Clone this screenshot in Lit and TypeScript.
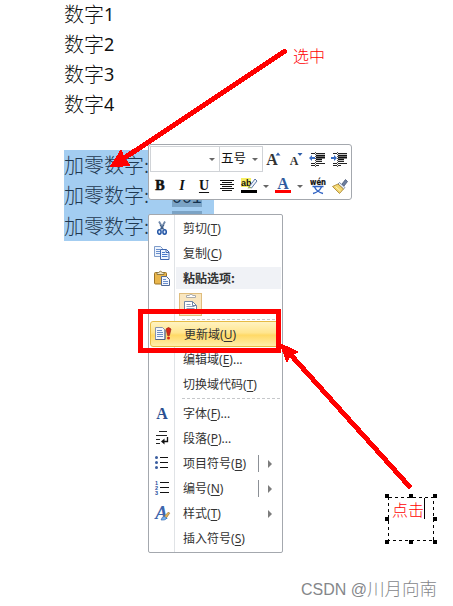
import { LitElement, html, svg, css, nothing, TemplateResult } from "lit";
import { customElement, property } from "lit/decorators.js";

const icons: Record<string, TemplateResult> = {
  cut: svg`<path d="M5 1.5 9.6 9.5M11 1.5 6.6 9.5" stroke="#6f87a8" stroke-width="1.8"/><path d="M6 5 9 9M10 5 7 9" stroke="#35557f"/><ellipse cx="5.4" cy="12" rx="1.7" ry="2.2" fill="#dce8fa" stroke="#2456a5" stroke-width="1.5"/><ellipse cx="10.6" cy="12" rx="1.7" ry="2.2" fill="#dce8fa" stroke="#2456a5" stroke-width="1.5"/>`,
  copy: svg`<path d="M0.500 1.500h6l2 2v8h-8z" fill="#eef4fd" stroke="#7f9cc9"/><path d="M2 4.500h4M2 6.500h4M2 8.500h4" stroke="#6b90cc"/><path d="M6.500 4.500h6l2.500 2.500v7.500h-8.500z" fill="#f2f7ff" stroke="#3f66ae"/><path d="M12 4.500v3h3" fill="none" stroke="#3f66ae"/><path d="M8 7.500h3M8 9.500h5.500M8 11.500h5.500" stroke="#4b7bcc"/>`,
  paste: svg`<rect x="0.500" y="2.500" width="12" height="11.500" rx="1" fill="#e9b64c" stroke="#9c7426"/><path d="M3 4.500V2.500h1.500q2-2.500 4 0H10v2z" fill="#f0e6c8" stroke="#8f7a45"/><path d="M7.500 6.500h5l3 3v6h-8z" fill="#f3f7ff" stroke="#536a94"/><path d="M9 9.500h3M9 11.500h5M9 13.500h5" stroke="#6b8fcc"/>`,
  update: svg`<path d="M0.500 1.500h7l2.500 2.500v9.500h-9.500z" fill="#f4f7fd" stroke="#8493b0"/><path d="M0.500 13.500h9.500V4" fill="none" stroke="#52627f"/><path d="M2 4.500h5M2 6.500h6M2 8.500h6M2 10.500h6" stroke="#6c8ec4"/><path d="M11 3q2.500-3 5 0L14.400 9.500h-1.800z" fill="#d92718" stroke="#9c2419" stroke-width=".7"/><circle cx="13.500" cy="12" r="1.500" fill="#d92718"/>`,
  font: svg`<text x="8" y="13.500" text-anchor="middle" font-family="Liberation Serif, serif" font-weight="700" font-size="16" fill="#2b4f91">A</text>`,
  para: svg`<path d="M5 1.500h8M2 5.500h11M2 9.500h4M2 13.500h4" stroke="#222" stroke-width="1.200"/><path d="M13.500 7v4.500H9" fill="none" stroke="#111" stroke-width="1.300"/><path d="M10.500 8.500v6L7 11.500z" fill="#111"/>`,
  bullets: svg`<path d="M6 2.500h8M6 7.500h8M6 12.500h8" stroke="#111"/><g fill="#3a5d9f"><circle cx="2.500" cy="2.500" r="1.500"/><circle cx="2.500" cy="7.500" r="1.500"/><circle cx="2.500" cy="12.500" r="1.500"/></g>`,
  numbers: svg`<path d="M6 2.500h9M6 7.500h9M6 12.500h9" stroke="#111"/><g fill="#274f9c" font-family="Liberation Sans, sans-serif" font-weight="700" font-size="5.500"><text x="1" y="4.500">1</text><text x="1" y="9.500">2</text><text x="1" y="14.500">3</text></g>`,
  style: svg`<text x="7.500" y="14" text-anchor="middle" font-family="Liberation Serif, serif" font-style="italic" font-weight="700" font-size="19" fill="#3d66ad">A</text><path d="M10 11.500 14.500 7l1.200 1.200-3.500 5z" fill="#e5b557" stroke="#8a6a33" stroke-width=".6"/><path d="M7 15q1-4 4-3.500l1.500 1.500Q12 15.500 7 15z" fill="#79b3ee" stroke="#3168ad" stroke-width=".6"/>`,
  center: svg`<path d="M1 2.500h14M3 4.500h10M1 6.500h14M3 8.500h10M1 10.500h14M3 12.500h10" stroke="#111"/>`,
  highlight: svg`<rect x="0" y="0" width="10" height="9" fill="#f6ee62"/><text x="0" y="8" font-family="Liberation Sans, sans-serif" font-size="9" fill="#111">ab</text><path d="M8 9 14 1l2 2L10.500 10z" fill="#edf2fa" stroke="#5b77a5"/><path d="M6.500 10.500 8 8l2.500 2z" fill="#a1b64c"/><path d="M0 12h16v3H0z" fill="#000"/>`,
  color: svg`<text x="8" y="11" text-anchor="middle" font-family="Liberation Serif, serif" font-weight="700" font-size="16" fill="#315b9e">A</text><path d="M0 12h16v3H0z" fill="#f00"/>`,
  grow: svg`<text x="6" y="14" text-anchor="middle" font-family="Liberation Serif, serif" font-weight="700" font-size="16" fill="#333">A</text><path d="M9.500 4.500h5L12 1.500z" fill="#2c5daa"/>`,
  shrink: svg`<text x="6" y="14" text-anchor="middle" font-family="Liberation Serif, serif" font-weight="700" font-size="12" fill="#333">A</text><path d="M9.500 2h5L12 5z" fill="#2c5daa"/>`,
  outdent: svg`<path d="M2 2.500h4M7 2.500h9M7 10.500h6M2 12.500h4M7 12.500h9M2 14.500h4M7 14.500h3" stroke="#222"/><path d="M6.500 1v15" stroke="#555" stroke-dasharray="1 1"/><path d="M7 4.500h9M7 8.500h6" stroke="#111" stroke-width="1.300"/><path d="M7 6.500h9" stroke="#111" stroke-width="2"/><path d="M0 7 3 4v2h3v2H3v2z" fill="#376cc3"/>`,
  indent: svg`<path d="M2 2.500h4M7 2.500h9M7 10.500h6M2 12.500h4M7 12.500h9M2 14.500h4M7 14.500h3" stroke="#222"/><path d="M6.500 1v15" stroke="#555" stroke-dasharray="1 1"/><path d="M7 4.500h9M7 8.500h6" stroke="#111" stroke-width="1.300"/><path d="M7 6.500h9" stroke="#111" stroke-width="2"/><path d="M6 7 3 4v2H0v2h3v2z" fill="#376cc3"/>`,
  phonetic: svg`<text x="0" y="6.500" textLength="16" lengthAdjust="spacingAndGlyphs" font-family="DejaVu Sans, sans-serif" font-size="8" fill="#111" stroke="#111" stroke-width=".2">wén</text><path d="M2.500 8.500h11M4.500 9Q7 14 13 15.500M11.500 9Q9 14 3 15.500" fill="none" stroke="#2f62c3" stroke-width="1.400"/>`,
  brush: svg`<path d="M10 6 13.500 1.500 15.500 3.500 12 8z" fill="#6d7f9f" stroke="#465675" stroke-width=".8"/><path d="M7.500 4.500 13 9.500 11.500 11 6 6z" fill="#eff3fa" stroke="#64779b" stroke-width=".8"/><path d="M6 6 11.500 11 7.500 15.500 0.500 8.500z" fill="#f2d56e" stroke="#a57f29" stroke-width=".8"/><path d="M3.500 8.500 8.500 13" stroke="#fff4bd"/>`,
  pasteBig: svg`<path d="M6.500 3.500v-2H9q2-3 4 0h2.500v2z" fill="#fff" stroke="#aaa"/><path d="M4.500 7.500h8l4 4v8h-12z" fill="#fff" stroke="#6f86a6"/><path d="M12.500 7.500v4h4" fill="none" stroke="#6f86a6"/><path d="M6.500 10.500h4M6.500 12.500h8M6.500 14.500h8M6.500 16.500h8" stroke="#8ea0b9"/>`,
};

const icon = (name: string, w = 17, h = 17) =>
  html`<svg width=${w} height=${h} viewBox="0 0 ${w} ${h}" fill="none">${icons[name]}</svg>`;

@customElement("menu-row")
class MenuRow extends LitElement {
  @property() icon = "";
  @property() label = "";
  @property() key = "";
  @property() tail = "";
  @property({ type: Boolean }) split = false;
  @property({ type: Boolean }) arrow = false;

  static styles = css`
    :host { display: flex; align-items: center; height: 25px; box-sizing: border-box; }
    .icon { width: 25px; display: flex; justify-content: center; flex: none; }
    svg { display: block; overflow: visible; }
    .label { margin-left: 8px; white-space: nowrap; flex: 1; line-height: 18px; }
    .latin { font-family: "Noto Sans", "Open Sans", sans-serif; font-size: 12px; }
    u { text-underline-offset: 2px; text-decoration-thickness: 1px; }
    .split { width: 1px; height: 17px; background: #8c9096; margin-right: 9px; }
    .arrow { border: 4px solid transparent; border-left-color: #7c7c7c; border-right: 0; margin-right: 9px; }
  `;

  render() {
    return html`
      <span class="icon">${this.icon ? icon(this.icon) : nothing}</span>
      <span class="label">${this.label}<span class="latin">(<u>${this.key}</u>)${this.tail}</span></span>
      ${this.split ? html`<span class="split"></span>` : nothing}
      ${this.arrow ? html`<span class="arrow"></span>` : nothing}
    `;
  }
}

@customElement("mini-toolbar")
class MiniToolbar extends LitElement {
  static styles = css`
    :host { display: block; box-sizing: border-box; width: 204px; height: 56px; background: #fff;
      border: 1px solid #a4a8ae; border-radius: 3px; padding: 1px; }
    .row { display: flex; align-items: center; height: 26px; }
    .combo { box-sizing: border-box; height: 26px; border: 1px solid #d0d3d7; display: flex; align-items: center;
      justify-content: flex-end; padding-right: 4px; font-size: 12.500px; line-height: 18px; color: #111; }
    .combo span:first-child:not(.caret) { margin-top: -3px; }
    .family { width: 70px; }
    .size { width: 43px; border-left: 0; justify-content: space-between; padding-left: 1px; }
    .caret { border: 3px solid transparent; border-top-color: #666; border-bottom: 0; }
    .top { display: flex; margin-left: 3px; }
    .top svg:nth-child(1), .top svg:nth-child(3) { margin-right: 6px; }
    .top svg:nth-child(2) { margin-right: 5px; }
    .bottom { margin-top: 1px; font: 700 14px "Liberation Serif", serif; color: #111; }
    .glyph { width: 22px; text-align: center; line-height: 20px; }
    .glyph:first-child { padding-right: 1px; width: 20px; }
    .heavy { -webkit-text-stroke: .6px #111; }
    svg { display: block; flex: none; overflow: visible; }
    .al { margin: 0 6px 0 4px; }
    .gap { margin: 0 6px; }
    .gap2 { margin: 0 9px 0 6px; }
    .ph { margin: 0 6px 0 -2px; }
    u { text-underline-offset: 2px; }
  `;

  render() {
    return html`
      <div class="row">
        <div class="combo family"><span class="caret"></span></div>
        <div class="combo size"><span>五号</span><span class="caret"></span></div>
        <div class="top">${["grow", "shrink", "outdent", "indent"].map((n) => icon(n, 16, 16))}</div>
      </div>
      <div class="row bottom">
        <span class="glyph heavy">B</span><span class="glyph"><i>I</i></span><span class="glyph"><u>U</u></span>
        <span class="al">${icon("center", 16, 16)}</span>
        ${icon("highlight", 16, 16)}<span class="caret gap"></span>
        ${icon("color", 16, 16)}<span class="caret gap2"></span>
        <span class="ph">${icon("phonetic", 16, 16)}</span>${icon("brush", 16, 16)}
      </div>
    `;
  }
}

@customElement("app-root")
class AppRoot extends LitElement {
  static styles = css`
    :host { display: block; position: relative; width: 453px; height: 606px; overflow: hidden; background: #fff;
      font-family: "Noto Sans CJK SC", sans-serif; color: #333; }
    .doc { padding-left: 64px; font-size: 20px; font-weight: 300; color: #111; }
    .line { height: 30px; line-height: 27px; white-space: nowrap; }
    .num { font: 400 18px/20px "Noto Sans", sans-serif; vertical-align: 1px; }
    .blank { height: 30px; }
    .sel { width: 150px; height: 91px; background: #a3cdf1; color: #1f3850; }
    .sel .line { display: flex; height: 30.4px; line-height: 29px; }
    .field { width: 30px; height: 27px; line-height: 37px; background: #7ba3c5; margin-left: 23px;
      font-family: "Liberation Mono", monospace; font-size: 16.500px; color: #14314d; }
    .toolbar { position: absolute; left: 148px; top: 144px; }
    .menu { position: absolute; left: 148px; top: 214px; width: 135px; height: 339px; box-sizing: border-box;
      border: 1px solid #a4a8ae; border-radius: 2px; padding: 1px; font-size: 12px;
      background: linear-gradient(#e0e3e6, #e0e3e6) 25px 0 / 1px 100% no-repeat #fff; }
    .head { display: flex; align-items: center; height: 24px; }
    .head-icon { width: 25px; display: flex; justify-content: center; }
    .head-text { flex: 1; height: 22px; line-height: 22px; padding-left: 7px; margin-left: 1px; background: #f0f2f6; font-weight: 700; }
    .paste { height: 28px; padding-left: 29px; display: flex; align-items: center; }
    .tile { width: 22px; height: 23px; box-sizing: border-box; width: 23px; border: 1px solid #dfbd7e; background: #f9e6bf; }
    .tile svg { display: block; }
    .rule { height: 0; border-top: 1px dashed #c6c8cb; margin: 1px 1px 1px 32px; }
    .rule.low { margin: 1px 1px 2px 32px; }
    .hot { border: 1px solid #e6bb45; border-radius: 3px; height: 26px;
      background: linear-gradient(#fff3c1 0%, #ffe58e 45%, #ffd966 55%, #ffeeaa 100%); }
    .box { position: absolute; left: 138px; top: 309px; width: 143px; height: 44px; box-sizing: border-box; border: 5px solid #f00; }
    .marks { position: absolute; inset: 0; }
    .note { position: absolute; color: #f00; font-size: 16px; line-height: 20px; font-weight: 300; }
    .pick { left: 293px; top: 45px; }
    .click { left: 392px; top: 499px; }
    .credit { position: absolute; left: 301px; top: 576px; font: 300 17.500px/24px "Noto Sans CJK SC", sans-serif;
      color: #85878a; white-space: nowrap; }
    .credit span { font: 400 16px/24px "Liberation Sans", sans-serif; }
  `;

  render() {
    return html`
      <div class="doc">
        ${[1, 2, 3, 4].map((n) => html`<div class="line">数字<span class="num">${n}</span></div>`)}
        <div class="blank"></div>
        <div class="sel">
          ${["", "001", ""].map((n) => html`<div class="line">加零数字:<span class="field">${n}</span></div>`)}
        </div>
      </div>
      <mini-toolbar class="toolbar"></mini-toolbar>
      <div class="menu">
        <menu-row icon="cut" label="剪切" key="T"></menu-row>
        <menu-row icon="copy" label="复制" key="C"></menu-row>
        <div class="head"><span class="head-icon">${icon("paste")}</span><span class="head-text">粘贴选项:</span></div>
        <div class="paste"><span class="tile">${icon("pasteBig", 21, 21)}</span></div>
        <div class="rule"></div>
        <menu-row class="hot" icon="update" label="更新域" key="U"></menu-row>
        <menu-row label="编辑域" key="E" tail="..."></menu-row>
        <menu-row label="切换域代码" key="T"></menu-row>
        <div class="rule low"></div>
        <menu-row icon="font" label="字体" key="F" tail="..."></menu-row>
        <menu-row icon="para" label="段落" key="P" tail="..."></menu-row>
        <menu-row icon="bullets" label="项目符号" key="B" split arrow></menu-row>
        <menu-row icon="numbers" label="编号" key="N" split arrow></menu-row>
        <menu-row icon="style" label="样式" key="T" arrow></menu-row>
        <menu-row label="插入符号" key="S"></menu-row>
      </div>
      <div class="box"></div>
      <svg class="marks" width="453" height="606" viewBox="0 0 453 606" shape-rendering="crispEdges">
        <g stroke="#f00" stroke-width="5" stroke-linecap="round"><path d="M284.500 51.500 122 159.500M409 486 290 354" /></g>
        <g fill="#f00" stroke="#f00" stroke-width="2" stroke-linejoin="round">
          <path d="M111 166.500 121 151 123 157 129 165z" /><path d="M281 344.500 297 352 290 355 287 361z" />
        </g>
        <rect x="388.500" y="497.500" width="45" height="43" fill="none" stroke="#000" stroke-dasharray="3 3" />
        <path d="M424.500 498v21" stroke="#000" />
        ${[387, 411, 435].map((x) => [496, 519, 542].map((y) =>
          x === 411 && y === 519 ? nothing : svg`<rect x=${x - 2} y=${y - 2} width="4" height="4" fill="#000" />`))}
      </svg>
      <div class="note pick">选中</div>
      <div class="note click">点击</div>
      <div class="credit"><span>CSDN @</span>川月向南</div>
    `;
  }
}
